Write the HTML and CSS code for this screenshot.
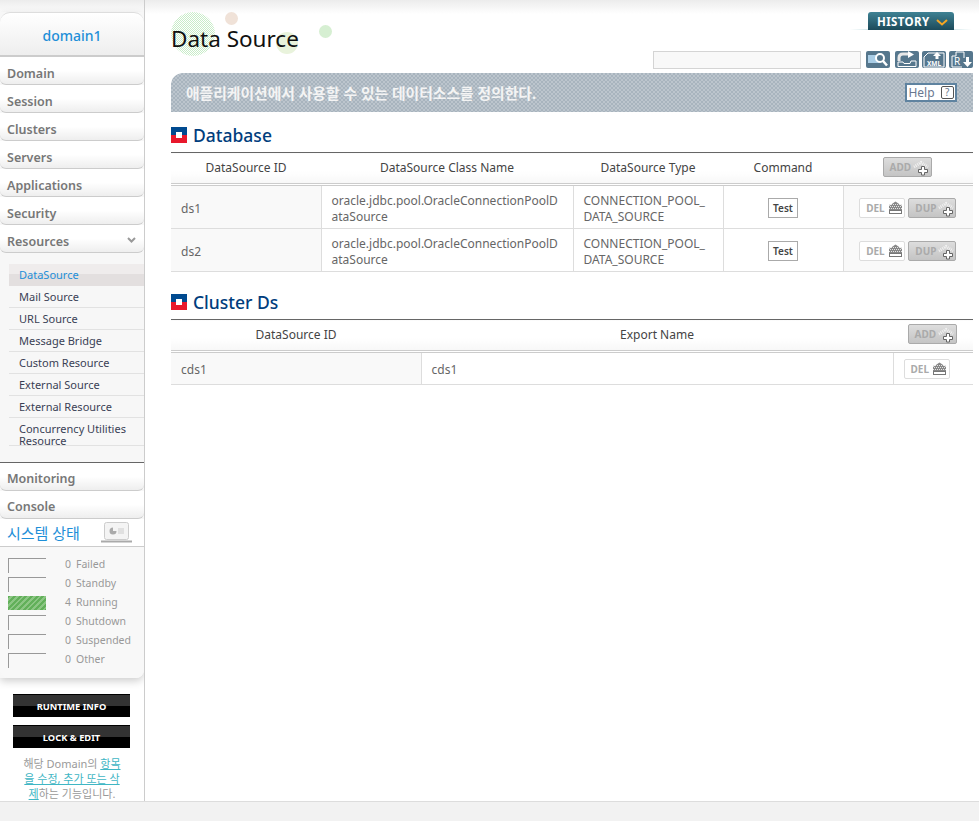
FILE: index.html
```html
<!DOCTYPE html>
<html lang="en">
<head>
  <meta charset="UTF-8">
  <title>Data Source</title>
  <link rel="stylesheet" href="styles.css">
</head>
<body>

  <div class="page">
    <!-- Left menu -->
    <aside class="sidebar">
      <div class="side-card">
        <div class="domain-name">domain1</div>
        <a class="menu-item">Domain</a>
        <a class="menu-item">Session</a>
        <a class="menu-item">Clusters</a>
        <a class="menu-item">Servers</a>
        <a class="menu-item">Applications</a>
        <a class="menu-item">Security</a>
        <a class="menu-item">Resources
          <svg class="menu-arrow" width="9" height="6" viewBox="0 0 9 6"><path d="M1 1l3.500 3.500L8 1" fill="none" stroke="#999" stroke-width="2"/></svg>
        </a>
        <ul class="submenu">
          <li class="active">DataSource</li>
          <li>Mail Source</li>
          <li>URL Source</li>
          <li>Message Bridge</li>
          <li>Custom Resource</li>
          <li>External Source</li>
          <li>External Resource</li>
          <li class="two-lines">Concurrency Utilities Resource</li>
        </ul>
        <a class="menu-item menu-item-top">Monitoring</a>
        <a class="menu-item menu-item-last">Console</a>
        <div class="status-head">
          <span>시스템 상태</span>
          <svg width="33" height="21" viewBox="0 0 33 21">
            <rect x="4.500" y="0.500" width="24" height="17" rx="2" fill="#f4f4f4" stroke="#ccc"/>
            <path d="M13 5.500a3.500 3.500 0 1 0 3.500 3.500H13z" fill="#aaa"/>
            <path d="M18 7h6M18 9h6M18 11h6" stroke="#ccc"/>
            <path d="M1 19.500h31" stroke="#aaa" stroke-width="2"/>
          </svg>
        </div>
        <div class="status-list">
          <div class="status-row"><span class="status-bar"></span><span class="status-num">0</span>Failed</div>
          <div class="status-row"><span class="status-bar"></span><span class="status-num">0</span>Standby</div>
          <div class="status-row"><span class="status-bar running"></span><span class="status-num">4</span>Running</div>
          <div class="status-row"><span class="status-bar"></span><span class="status-num">0</span>Shutdown</div>
          <div class="status-row"><span class="status-bar"></span><span class="status-num">0</span>Suspended</div>
          <div class="status-row"><span class="status-bar"></span><span class="status-num">0</span>Other</div>
        </div>
      </div>
      <button class="black-btn">RUNTIME INFO</button>
      <button class="black-btn">LOCK &amp; EDIT</button>
      <p class="lock-note">해당 Domain의 <a>항목을 수정, 추가 또는 삭제</a>하는 기능입니다.</p>
    </aside>

    <!-- Content -->
    <main class="content">
      <div class="history-wrap">
        <div class="history-tab">HISTORY
          <svg width="12" height="7" viewBox="0 0 12 7"><path d="M1 1l5 4.500L11 1" fill="none" stroke="#f5a623" stroke-width="2"/></svg>
        </div>
      </div>

      <div class="title-row">
        <i class="dot dot1"></i><i class="dot dot2"></i><i class="dot dot3"></i><i class="dot dot4"></i>
        <h1>Data Source</h1>
      </div>

      <div class="tools">
        <input class="search-input" type="text">
        <span class="tool-btn tool-search">
          <svg width="22" height="15" viewBox="0 0 22 15"><rect x="1" y="3" width="11" height="8" fill="#a9cde6"/><circle cx="13" cy="6" r="4" fill="#56778d" stroke="#fff" stroke-width="2"/><path d="M16 9l4 4.500" stroke="#fff" stroke-width="2.500"/></svg>
        </span>
        <span class="tool-btn">
          <svg width="24" height="17" viewBox="0 0 24 17"><path d="M4 10V7q0-4 4-4h6" fill="none" stroke="#e8e8e8" stroke-width="3"/><path d="M13 0l6 3.500L13 7z" fill="#fff"/><path d="M3 11h5l1 1.500h6l1-2.500h5v5.500H3z" fill="#56778d" stroke="#fff"/></svg>
        </span>
        <span class="tool-btn">
          <svg width="24" height="17" viewBox="0 0 24 17"><path d="M2 16V6l4-4h16v14z" fill="none" stroke="#fff"/><path d="M15 1l4 4h-2.500v3h-3V5H11z" fill="#fff"/><text class="tool-text" x="12" y="15" text-anchor="middle">XML</text></svg>
        </span>
        <span class="tool-btn">
          <svg width="24" height="17" viewBox="0 0 24 17"><path d="M3 16V5h4V1h8v6" fill="none" stroke="#fff"/><path d="M3 16h10" stroke="#fff"/><text class="tool-text tool-text-big" x="5" y="14">R</text><path d="M17 6h3v5h3l-4.500 5L14 11h3z" fill="#fff"/></svg>
        </span>
      </div>

      <div class="banner">
        <span>애플리케이션에서 사용할 수 있는 데이터소스를 정의한다.</span>
        <a class="help-btn">Help <b>?</b></a>
      </div>

      <h2 class="section-title"><i class="bullet"></i>Database</h2>
      <table class="grid">
        <colgroup>
          <col class="c150"><col class="c252"><col class="c150"><col class="c120"><col>
        </colgroup>
        <thead>
          <tr>
            <th>DataSource ID</th>
            <th>DataSource Class Name</th>
            <th>DataSource Type</th>
            <th>Command</th>
            <th class="th-add"><a class="act-btn act-grey">ADD<svg class="ico" width="17" height="18" viewBox="0 0 17 18"><use href="#ico-plus"/></svg></a></th>
          </tr>
        </thead>
        <tbody>
          <tr>
            <td class="first">ds1</td>
            <td>oracle.jdbc.pool.OracleConnectionPoolD<br>ataSource</td>
            <td>CONNECTION_POOL_<br>DATA_SOURCE</td>
            <td class="center"><a class="test-btn">Test</a></td>
            <td class="center shade">
              <a class="act-btn act-white">DEL<svg class="ico" width="17" height="18" viewBox="0 0 17 18"><use href="#ico-del"/></svg></a>
              <a class="act-btn act-grey act-dup">DUP<svg class="ico" width="17" height="18" viewBox="0 0 17 18"><use href="#ico-plus"/></svg></a>
            </td>
          </tr>
          <tr>
            <td class="first">ds2</td>
            <td>oracle.jdbc.pool.OracleConnectionPoolD<br>ataSource</td>
            <td>CONNECTION_POOL_<br>DATA_SOURCE</td>
            <td class="center"><a class="test-btn">Test</a></td>
            <td class="center shade">
              <a class="act-btn act-white">DEL<svg class="ico" width="17" height="18" viewBox="0 0 17 18"><use href="#ico-del"/></svg></a>
              <a class="act-btn act-grey act-dup">DUP<svg class="ico" width="17" height="18" viewBox="0 0 17 18"><use href="#ico-plus"/></svg></a>
            </td>
          </tr>
        </tbody>
      </table>

      <h2 class="section-title title-cluster"><i class="bullet"></i>Cluster Ds</h2>
      <table class="grid grid-cluster">
        <colgroup>
          <col class="c251"><col class="c471"><col>
        </colgroup>
        <thead>
          <tr>
            <th>DataSource ID</th>
            <th>Export Name</th>
            <th class="th-add"><a class="act-btn act-grey">ADD<svg class="ico" width="17" height="18" viewBox="0 0 17 18"><use href="#ico-plus"/></svg></a></th>
          </tr>
        </thead>
        <tbody>
          <tr>
            <td class="first">cds1</td>
            <td>cds1</td>
            <td class="center-del"><a class="act-btn act-white">DEL<svg class="ico" width="17" height="18" viewBox="0 0 17 18"><use href="#ico-del"/></svg></a></td>
          </tr>
        </tbody>
      </table>
    </main>
  </div>

  <div class="bottom-bar"></div>

  <!-- Shared button icons -->
  <svg class="icon-defs" width="0" height="0">
    <defs>
      <g id="ico-plus">
        <path d="M1 9l7-4.500 7 4.500" fill="none" stroke="#f2f2f2" stroke-width="3" stroke-dasharray="1 1"/>
        <path d="M5.500 11.500h3v-3h3v3h3v3h-3v2.500h-3v-2.500h-3z" fill="#fff" stroke="#666"/>
      </g>
      <g id="ico-del">
        <path d="M2 7l6.500-4.500L15 7v4H2z" fill="#888"/>
        <path d="M2 5.500h13M2 9.500h13" stroke="#e4e4e4" stroke-dasharray="1 1"/>
        <path d="M3 7.500h12" stroke="#e4e4e4" stroke-dasharray="1 1"/>
        <rect x="2.500" y="11.500" width="12" height="3" fill="#fff" stroke="#777"/>
      </g>
    </defs>
  </svg>

</body>
</html>
```

FILE: styles.css
```css
/* Page frame */
html, body {
  margin: 0;
  height: 821px;
  overflow: hidden;
}

body {
  background: linear-gradient(#ececec, #fff 14px);
  font-family: "Noto Sans", "Noto Sans CJK KR", sans-serif;
  color: #444;
}

.page {
  display: flex;
  height: 801px;
  overflow: hidden;
}

.bottom-bar {
  height: 19px;
  background-color: #f2f2f2;
  border-top: 1px solid #ddd;
}

/* Sidebar */
.sidebar {
  width: 144px;
  flex-shrink: 0;
  padding-top: 12px;
  border-right: 1px solid #ccc;
  text-align: center;
  overflow: hidden;
}

.side-card {
  background-color: #f7f7f7;
  border-radius: 0 0 8px 0;
  box-shadow: 0 3px 8px rgba(0, 0, 0, 0.2);
  text-align: left;
}

.domain-name {
  height: 42px;
  line-height: 46px;
  text-align: center;
  font-size: 14px;
  font-weight: 500;
  color: #1e8fd8;
  background: linear-gradient(#fff, #eee);
  border-top: 1px solid #ddd;
  border-radius: 10px 10px 0 0;
  border-bottom: 2px solid #ccc;
}

.menu-item {
  display: block;
  position: relative;
  height: 27px;
  line-height: 33px;
  padding-left: 7px;
  font-size: 12.500px;
  font-weight: 600;
  color: #777;
  background: linear-gradient(#fff 50%, #eee);
  border-bottom: 1px solid #ccc;
  border-radius: 0 0 6px 6px;
}

.menu-item-top {
  line-height: 31px;
  border-top: 1px solid #666;
  border-radius: 0 0 6px 6px;
  margin-top: 16px;
}

.menu-item-last {
  line-height: 31px;
}

.menu-arrow {
  position: absolute;
  right: 8px;
  top: 12px;
}

.submenu {
  list-style: none;
  margin: 0;
  padding: 11px 0 0 9px;
  font-size: 11px;
  color: #3a3f55;
}

.submenu li {
  height: 21px;
  line-height: 22px;
  padding-left: 10px;
  border-bottom: 1px solid #e2e2e2;
}

.submenu .active {
  color: #1e8fd8;
  background: linear-gradient(#efecec 45%, #e3dfdf 45%);
  border-bottom: 0;
  height: 22px;
}

.submenu .two-lines {
  height: 22px;
  line-height: 12px;
  padding-top: 5px;
  padding-right: 10px;
}

.status-head {
  display: flex;
  justify-content: space-between;
  align-items: center;
  box-sizing: border-box;
  height: 28px;
  padding: 0 11px 0 7px;
  background-color: #fff;
  border-bottom: 1px solid #ccc;
  font-size: 15px;
  color: #1e8fd8;
}

.status-list {
  padding: 9px 0 8px 8px;
  background-color: #f8f8f8;
  border-radius: 0 0 8px 8px;
}

.status-row {
  display: flex;
  align-items: flex-start;
  height: 19px;
  line-height: 16px;
  font-size: 10.500px;
  color: #999;
}

.status-bar {
  width: 37px;
  height: 14px;
  margin-top: 2px;
  border-top: 1px solid #999;
  border-left: 1px solid #999;
}

.status-bar.running {
  width: 38px;
  height: 14px;
  border: 0;
  background: repeating-linear-gradient(135deg, #62b05a 0 2px, #8cc684 2px 4px);
}

.status-num {
  width: 11px;
  margin: 0 5px 0 14px;
  text-align: right;
}

.black-btn {
  display: block;
  width: 117px;
  height: 23px;
  margin: 16px 0 0 13px;
  padding: 0;
  border: 0;
  border-top: 1px solid #000;
  background: linear-gradient(#333 50%, #000 50%);
  color: #fff;
  font-family: inherit;
  font-size: 9.300px;
  font-weight: 700;
}

.black-btn + .black-btn {
  margin-top: 8px;
}

.lock-note {
  margin: 8px 20px 0 20px;
  font-size: 11px;
  line-height: 15px;
  color: #999;
}

.lock-note a {
  color: #3fb6c4;
  text-decoration: underline;
}

/* Content */
.content {
  position: relative;
  flex: 1;
  padding: 0 6px 0 26px;
}

.history-wrap {
  display: flex;
  justify-content: center;
  position: absolute;
  top: 12px;
  right: 7px;
  width: 122px;
  height: 18px;
  background: linear-gradient(to right, #fff, #a9d0d6 30%, #a9d0d6 70%, #fff) bottom / 100% 1px no-repeat;
}

.history-tab {
  width: 86px;
  height: 18px;
  line-height: 20px;
  box-sizing: border-box;
  padding-left: 9px;
  border-radius: 3px 3px 0 0;
  background: linear-gradient(#3f8294, #1c4a5a);
  color: #fff;
  font-size: 11.500px;
  font-weight: 700;
  letter-spacing: 0.400px;
}

.history-tab svg {
  margin-left: 3px;
}

.title-row {
  position: relative;
  height: 51px;
  padding-top: 13px;
  box-sizing: border-box;
}

.title-row h1 {
  position: relative;
  margin: 0;
  font-size: 22.500px;
  line-height: 31px;
  padding-top: 10px;
  font-weight: 400;
  color: #111;
}

.dot {
  position: absolute;
  border-radius: 50%;
}

.dot1 {
  left: 0;
  top: 12px;
  width: 44px;
  height: 44px;
  background: repeating-conic-gradient(#c8ecc8 0 25%, #fff 0 50%) 0 0 / 2px 2px;
}

.dot2 {
  left: 54px;
  top: 12px;
  width: 13px;
  height: 13px;
  background-color: #f0e2d8;
}

.dot3 {
  left: 148px;
  top: 25px;
  width: 13px;
  height: 13px;
  background-color: #d6efd2;
}

.dot4 {
  left: 105px;
  top: 32px;
  width: 22px;
  height: 22px;
  background-color: #e9f3dc;
}

.tools {
  display: flex;
  justify-content: flex-end;
  align-items: flex-start;
  height: 22px;
  gap: 3px;
}

.search-input {
  width: 206px;
  height: 16px;
  padding: 0;
  margin-right: 2px;
  border: 1px solid #d4d4d4;
  background-color: #f8f8f8;
}

.tool-btn {
  display: flex;
  align-items: center;
  justify-content: center;
  width: 24px;
  height: 17px;
  background-color: #56778d;
  border-radius: 2px;
}

.tool-search {
  margin-right: 2px;
}

.tool-text {
  font-size: 6.500px;
  font-weight: 700;
  fill: #fff;
}

.tool-text-big {
  font-size: 10px;
  font-weight: 400;
}

.banner {
  display: flex;
  justify-content: space-between;
  align-items: center;
  height: 39px;
  padding: 0 16px 0 15px;
  border-radius: 12px 0 0 0;
  background: repeating-conic-gradient(#a8b4be 0 25%, #bcc5cd 0 50%) 0 0 / 4px 4px;
  color: #f4f4f4;
  font-size: 14.800px;
  font-weight: 700;
}

.help-btn {
  display: flex;
  align-items: center;
  justify-content: center;
  gap: 6px;
  width: 48px;
  height: 15px;
  background-color: #fff;
  border: 2px solid #5f83a0;
  color: #6a7890;
  font-size: 12px;
  font-weight: 400;
}

.help-btn b {
  width: 11px;
  height: 11px;
  line-height: 11px;
  text-align: center;
  font-size: 10px;
  border: 1px solid #555;
  border-radius: 2px;
  font-weight: 400;
}

.section-title {
  display: flex;
  align-items: center;
  box-sizing: border-box;
  height: 40px;
  padding-top: 6px;
  margin: 0;
  font-size: 17.500px;
  font-weight: 500;
  color: #003d7d;
}

.title-cluster {
  height: 47px;
  padding-top: 13px;
}

.bullet {
  position: relative;
  width: 16px;
  height: 16px;
  margin-right: 6px;
  background: linear-gradient(#004a90 50%, #e8182c 50%);
}

.bullet::after {
  content: "";
  position: absolute;
  left: 5px;
  top: 5px;
  width: 6px;
  height: 6px;
  background-color: #fff;
}

/* Tables */
.grid {
  width: 802px;
  table-layout: fixed;
  border-collapse: collapse;
  border-top: 1px solid #666;
  font-size: 12px;
}

.c150 { width: 150px; }
.c252 { width: 252px; }
.c120 { width: 120px; }
.c251 { width: 250px; }
.c471 { width: 472px; }

.grid th {
  height: 28px;
  padding: 0 0 2px;
  font-weight: 400;
  color: #444;
  background: linear-gradient(#fff 60%, #f7f7f7);
  border-bottom: 1px solid #ddd;
}

.grid th.th-add {
  padding-right: 2px;
}

.grid thead tr {
  border-bottom: 3px double #ccc;
}

.grid td {
  height: 38px;
  padding: 4px 10px 0;
  line-height: 16px;
  color: #666;
  border-left: 1px solid #ddd;
  border-bottom: 1px solid #ddd;
}

.grid td.first {
  background-color: #f9f9f9;
  border-left: 0;
}

.grid td.center {
  padding: 2px 0 0;
  text-align: center;
}

.grid td.shade {
  padding-right: 1px;
  background-color: #f9f9f9;
  white-space: nowrap;
}

.grid-cluster td {
  height: 29px;
  padding-top: 2px;
}

.grid td.center-del {
  padding: 0 0 0 10px;
}

.test-btn {
  display: inline-block;
  width: 28px;
  height: 18px;
  line-height: 18px;
  background-color: #fff;
  border: 1px solid #aaa;
  font-size: 10px;
  font-weight: 600;
  color: #444;
  vertical-align: middle;
}

.act-btn {
  display: inline-flex;
  align-items: center;
  box-sizing: border-box;
  height: 20px;
  padding-left: 6px;
  border: 1px solid #bbb;
  border-radius: 2px;
  font-size: 10px;
  font-weight: 700;
  vertical-align: middle;
  text-align: left;
}

.act-white {
  width: 46px;
  background-color: #fff;
  border-color: #ddd;
  color: #aaa;
}

.act-grey {
  width: 49px;
  background: linear-gradient(#ddd, #c4c4c4);
  border-color: #aaa;
  color: #aaa;
}

.act-dup {
  width: 48px;
}

.ico {
  flex-shrink: 0;
  margin-left: 2px;
}

.icon-defs {
  position: absolute;
}
```
